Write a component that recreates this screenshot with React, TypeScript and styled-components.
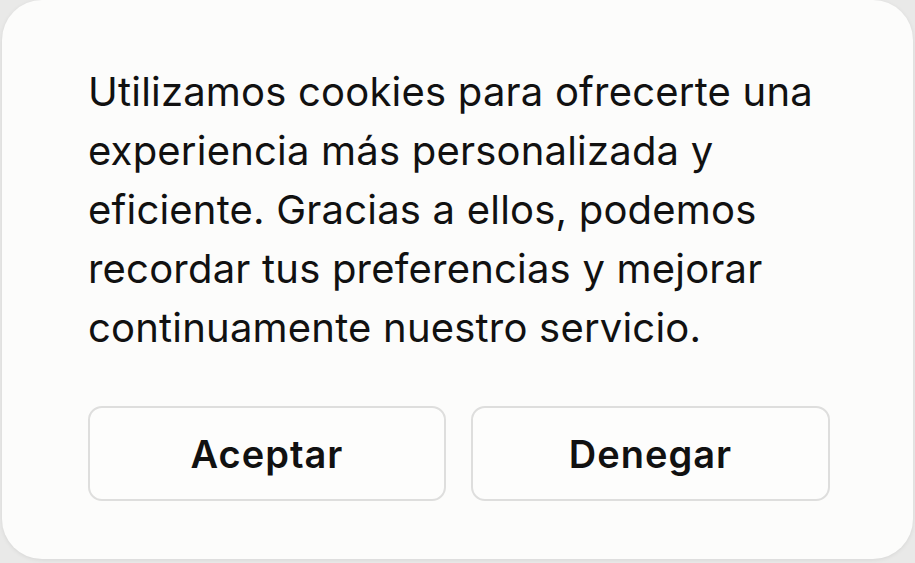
import styled, { createGlobalStyle } from 'styled-components';

const GlobalStyle = createGlobalStyle`
  html, body {
    margin: 0;
    padding: 0;
    background: #e9e9e8;
  }
  body {
    font-family: Inter, "Noto Sans", "Liberation Sans", sans-serif;
  }
`;

const Page = styled.div`
  width: 915px;
  height: 563px;
  padding: 0 2px 4px 2px;
  box-sizing: border-box;
`;

const Card = styled.div`
  height: 559px;
  box-sizing: border-box;
  background: #fcfcfb;
  border-radius: 40px;
  box-shadow: 0 1px 4px rgba(0, 0, 0, 0.08);
  padding: 62px 60px 0 86px;
  display: flex;
  flex-direction: column;
`;

const Message = styled.p`
  margin: 0;
  font-size: 40px;
  line-height: 59px;
  color: #111;
  font-weight: 400;
  letter-spacing: 0.2px;
`;

const Actions = styled.div`
  display: grid;
  grid-template-columns: 358px 359px;
  gap: 25px;
  margin-top: 49px;
`;

const ActionButton = styled.button`
  height: 95px;
  background: #fdfdfc;
  border: 2px solid #dededd;
  border-radius: 14px;
  font-family: inherit;
  font-size: 38px;
  font-weight: 600;
  letter-spacing: 1px;
  color: #111;
  cursor: pointer;
`;

export default function App() {
  return (
    <>
      <GlobalStyle />
      <Page>
        <Card>
          <Message>
            Utilizamos cookies para ofrecerte una experiencia más personalizada y
            eficiente. Gracias a ellos, podemos recordar tus preferencias y mejorar
            continuamente nuestro servicio.
          </Message>
          <Actions>
            <ActionButton>Aceptar</ActionButton>
            <ActionButton>Denegar</ActionButton>
          </Actions>
        </Card>
      </Page>
    </>
  );
}
